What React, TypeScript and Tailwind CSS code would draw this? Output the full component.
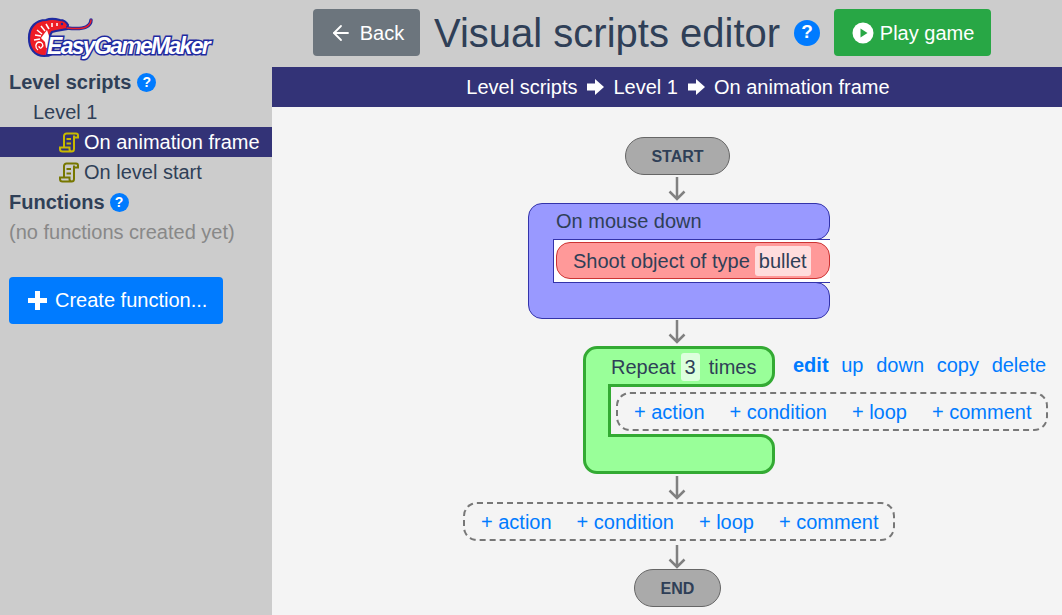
import { ArrowLeft } from "lucide-react";

const ink = "text-[#2f3f57]";

function Help({ big }: { big?: boolean }) {
  return (
    <span
      className={
        big
          ? "flex h-[26px] w-[26px] shrink-0 items-center justify-center rounded-full bg-[#007bff] text-[19px] font-bold text-white"
          : "flex h-[19px] w-[19px] shrink-0 items-center justify-center rounded-full bg-[#007bff] text-[14px] font-bold text-white"
      }
    >
      ?
    </span>
  );
}

function Logo() {
  return (
    <div className="relative ml-[27px] h-[67px] w-[190px]">
      <svg width="46" height="45" viewBox="0 0 46 45" className="absolute left-0 top-[17px]">
        <path
          d="M2 21C2 10 9 3 19 3c5-2 10-1 14 0 4 0 7 3 8 5l-1 4-11 2-4 1c-3 3-2 8 0 12l2 3-2 7c-3 2-6 2-8 2C8 39 2 32 2 21z"
          fill="#ee1c25"
          stroke="#1f2aa0"
          strokeWidth="2.200"
        />
        <path d="M10 13l5 4M14 9l4 5M19 7l3 5M8 18l6 1M7 23l6-1M25 6v4M30 6v3" stroke="#fff" strokeWidth="1.500" fill="none" />
        <path d="M20 13l3 9 1 8-5 1-1-6-4-4z" fill="#fff" />
        <path d="M11 33c-3-2-3-7 1-8 3 0 5 3 3 5-1 2-3 1-3-1" fill="none" stroke="#fff" strokeWidth="1.300" />
        <circle cx="35" cy="7" r="1.200" fill="#1f2aa0" />
      </svg>
      <svg width="30" height="16" viewBox="0 0 30 16" className="absolute left-[39px] top-[17px]">
        <path d="M1 11c9 1 15 1 19-1 4-2 5-4 5-7" fill="none" stroke="#1f2aa0" strokeWidth="3.500" strokeLinecap="round" />
        <path d="M1 11c9 1 15 1 19-1 4-2 5-4 5-7" fill="none" stroke="#e8202a" strokeWidth="1.500" strokeLinecap="round" />
      </svg>
      <span className="absolute left-[20px] top-[35px] whitespace-nowrap text-[23px] font-bold italic leading-[23px] tracking-[-1.700px] text-white [-webkit-text-stroke:3px_#1f2aa0] [paint-order:stroke_fill]">
        EasyGameMaker
      </span>
    </div>
  );
}

function ScrollIcon({ className }: { className: string }) {
  return (
    <svg width="20" height="21" viewBox="0 0 20 21" fill="none" stroke="currentColor" strokeWidth="2" className={className} aria-hidden="true">
      <path d="M5 15.500V4a2.500 2.500 0 0 1 2.500-2.500H17a2 2 0 0 1 2 2V5.500h-4" />
      <path d="M15 3.500V17a2.500 2.500 0 0 1-2.500 2.500h-9A2.500 2.500 0 0 1 1 17v-1.500h9.500V17a2.500 2.500 0 0 0 2 2.500" />
      <path d="M7.500 7H12M7.500 11.500H12" />
    </svg>
  );
}

function TreeRow({ label, active }: { label: string; active?: boolean }) {
  return (
    <div className={active ? "flex h-[30px] items-center gap-[5px] bg-[#333377] pl-[59px] text-white" : `flex h-[30px] items-center gap-[5px] pl-[59px] ${ink}`}>
      <ScrollIcon className={active ? "text-[#c8b900]" : "text-[#777700]"} />
      {label}
    </div>
  );
}

function Sidebar() {
  return (
    <aside className="h-full w-[272px] shrink-0 bg-[#cccccc] text-[20px]">
      <Logo />
      <div className={`flex h-[30px] items-center gap-[6px] pl-[9px] font-bold ${ink}`}>
        Level scripts <Help />
      </div>
      <div className={`flex h-[30px] items-center pl-[33px] ${ink}`}>Level 1</div>
      <TreeRow label="On animation frame" active />
      <TreeRow label="On level start" />
      <div className={`flex h-[30px] items-center gap-[5px] pl-[9px] font-bold ${ink}`}>
        Functions <Help />
      </div>
      <div className="flex h-[30px] items-center pl-[9px] text-[#888888]">(no functions created yet)</div>
      <button className="ml-[9px] mt-[30px] flex h-[47px] w-[214px] items-center gap-[8px] rounded-[4px] bg-[#007bff] pb-[1px] pl-[19px] text-white">
        <svg width="19" height="19" viewBox="0 0 19 19" aria-hidden="true">
          <path d="M7 0h5v7h7v5h-7v7H7v-7H0V7h7z" fill="#fff" />
        </svg>
        Create function...
      </button>
    </aside>
  );
}

function Header() {
  return (
    <div className="flex h-[67px] items-center gap-[14px] pb-[2px] pl-[41px]">
      <button className="flex h-[47px] w-[107px] items-center justify-center gap-[7px] rounded-[4px] bg-[#6c757d] text-[20px] text-white">
        <ArrowLeft size={24} strokeWidth={1.800} aria-hidden="true" />
        Back
      </button>
      <h1 className={`text-[40px] font-normal leading-[48px] ${ink}`}>Visual scripts editor</h1>
      <Help big />
      <button className="flex h-[47px] w-[157px] items-center justify-center gap-[6px] rounded-[4px] bg-[#28a745] pl-[1px] text-[20px] text-white">
        <svg width="22" height="22" viewBox="0 0 22 22" aria-hidden="true">
          <circle cx="11" cy="11" r="10.500" fill="#fff" />
          <path d="M8.500 6.500l7 4.500-7 4.500z" fill="#28a745" />
        </svg>
        Play game
      </button>
    </div>
  );
}

function ThickArrow() {
  return (
    <svg width="17" height="16" viewBox="0 0 17 16" aria-hidden="true">
      <path d="M0 4.500h8V0l9 8-9 8v-4.500H0z" fill="#fff" />
    </svg>
  );
}

function Breadcrumb() {
  return (
    <div className="flex h-[40px] items-center justify-center gap-[9.500px] bg-[#333377] pl-[22px] text-[20px] text-white">
      <span>Level scripts</span>
      <ThickArrow />
      <span>Level 1</span>
      <ThickArrow />
      <span>On animation frame</span>
    </div>
  );
}

function Arrow({ className = "h-[28px] pt-[2px]" }: { className?: string }) {
  return (
    <div className={`ml-[396px] flex w-[18px] items-start ${className}`}>
      <svg width="18" height="24" viewBox="0 0 18 24" className="shrink-0" aria-hidden="true">
        <path d="M9 0v22M1.500 14.500L9 22l7.500-7.500" fill="none" stroke="#808080" strokeWidth="2.500" />
      </svg>
    </div>
  );
}

function Terminal({ label, className }: { label: string; className: string }) {
  return (
    <div className={`flex h-[38px] items-center justify-center rounded-[19px] border border-[#666666] bg-[#aaaaaa] pt-[1px] text-[16px] font-bold ${ink} ${className}`}>
      {label}
    </div>
  );
}

function AddLinks({ className }: { className: string }) {
  return (
    <div className={`flex h-[39px] w-[432px] items-center gap-[25px] rounded-[14px] border-2 border-dashed border-[#777777] pl-[16px] text-[20px] text-[#007bff] ${className}`}>
      <span>+ action</span>
      <span>+ condition</span>
      <span>+ loop</span>
      <span>+ comment</span>
    </div>
  );
}

function EventBlock() {
  return (
    <div className={`ml-[256px] w-[302px] text-[20px] ${ink}`}>
      <div className="flex h-[37px] items-center rounded-t-[14px] rounded-br-[14px] border border-[#3333aa] bg-[#9999ff] pb-[1px] pl-[27px]">
        On mouse down
      </div>
      <div className="relative z-10 -my-px flex h-[44px]">
        <div className="w-[25px] border-l border-[#3333aa] bg-[#9999ff]" />
        <div className="flex flex-1 items-center border-y border-l border-[#3333aa] bg-white pb-[1px] pl-[2px]">
          <div className="flex h-[37px] flex-1 items-center gap-[5px] rounded-[14px] border border-[#cc3333] bg-[#ff9999] pl-[16px]">
            Shoot object of type
            <span className="flex h-[30px] items-center rounded-[3px] bg-[#ffdddd] px-[4px]">bullet</span>
          </div>
        </div>
      </div>
      <div className="h-[37px] rounded-b-[14px] rounded-tr-[14px] border border-[#3333aa] bg-[#9999ff]" />
    </div>
  );
}

function LoopBlock() {
  return (
    <div className={`ml-[311px] text-[20px] ${ink}`}>
      <div className="flex items-start">
        <div className="flex h-[41px] w-[192px] items-center rounded-t-[14px] rounded-br-[14px] border-[3px] border-[#33aa33] bg-[#99ff99] pl-[25px]">
          Repeat
          <span className="ml-[5px] mr-[9px] flex h-[28px] items-center rounded-[3px] bg-[#ddffdd] px-[4px]">3</span>
          times
        </div>
        <div className="ml-[18px] flex h-[38px] items-center gap-[12.700px] text-[#007bff]">
          <b>edit</b>
          <span>up</span>
          <span>down</span>
          <span>copy</span>
          <span>delete</span>
        </div>
      </div>
      <div className="relative z-10 -my-[3px] flex h-[53px] items-start">
        <div className="h-full w-[28px] border-x-[3px] border-x-[#33aa33] bg-[#99ff99]" />
        <AddLinks className="ml-[5px] mt-[8px]" />
      </div>
      <div className="h-[40px] w-[192px] rounded-b-[14px] rounded-tr-[14px] border-[3px] border-[#33aa33] bg-[#99ff99]" />
    </div>
  );
}

export default function App() {
  return (
    <div className="flex h-[615px] w-[1062px] overflow-hidden font-['Liberation_Sans',Arial,sans-serif]">
      <Sidebar />
      <main className="flex min-w-0 flex-1 flex-col bg-[#cccccc]">
        <Header />
        <Breadcrumb />
        <div className="flex flex-1 flex-col items-start bg-[#f4f4f4] pt-[30px]">
          <Terminal label="START" className="ml-[353px] w-[105px]" />
          <Arrow />
          <EventBlock />
          <Arrow className="h-[27px] pt-[1px]" />
          <LoopBlock />
          <Arrow />
          <AddLinks className="ml-[191px]" />
          <Arrow className="h-[28px] pt-[4px]" />
          <Terminal label="END" className="ml-[362px] w-[87px]" />
        </div>
      </main>
    </div>
  );
}
